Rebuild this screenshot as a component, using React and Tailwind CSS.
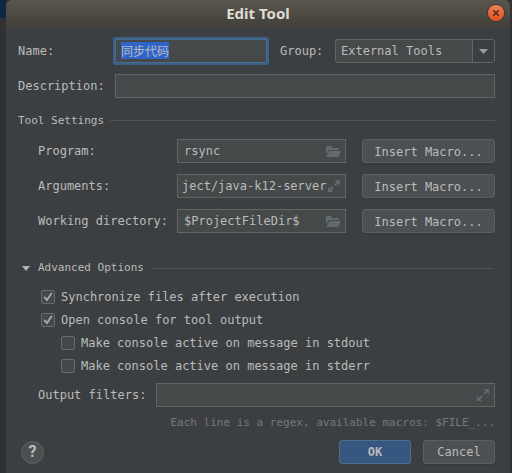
import { useEffect, useRef } from "react";

const INPUT =
  "h-6 w-full min-w-0 border border-[#646464] bg-[#45494a] text-xs leading-[22px] text-[#bbbbbb] outline-none";
const BUTTON =
  "h-6 rounded-[3px] border border-[#5e6060] bg-[#4c5052] text-xs leading-[22px] text-[#bbbbbb] shadow-[0_1px_1px_#36393b]";

function FolderIcon() {
  return (
    <svg className="h-4 w-4" viewBox="0 0 16 16" fill="#616a6e" aria-hidden="true">
      <path d="M0 11.5V3h5l1.6 2H13v2H3z" />
      <path d="M3.6 8H15l-2.8 6H0z" />
    </svg>
  );
}

function ExpandIcon() {
  return (
    <svg className="h-4 w-4" viewBox="0 0 16 16" fill="#616a6e" aria-hidden="true">
      <path d="M9 2h5v5l-1.8-1.8-2.5 2.5-1.4-1.4 2.5-2.5z" />
      <path d="M7 14H2V9l1.8 1.8 2.5-2.5 1.4 1.4-2.5 2.5z" />
    </svg>
  );
}

function IconField({ id, value, icon, label, className }) {
  return (
    <div className="relative min-w-0 flex-1">
      <input id={id} className={`${INPUT} ${className || "pr-6 pl-[6px]"}`} defaultValue={value} />
      <button type="button" aria-label={label} className="absolute top-1 right-1 h-4 w-4">
        {icon}
      </button>
    </div>
  );
}

function SettingRow({ id, label, children }) {
  return (
    <div className="flex items-center">
      <label htmlFor={id} className="w-[139px] shrink-0">
        {label}
      </label>
      {children}
      <button type="button" className={`${BUTTON} ml-4 w-[133px] shrink-0 pt-px`}>
        Insert Macro...
      </button>
    </div>
  );
}

function CheckRow({ id, label, checked, className }) {
  return (
    <div className={`flex h-[23px] items-center ${className || ""}`}>
      <span className="relative h-[14px] w-[14px] shrink-0">
        <input
          id={id}
          type="checkbox"
          defaultChecked={checked}
          className="peer block h-[14px] w-[14px] appearance-none rounded-[2px] border border-[#6b6b6b] bg-[#43494a]"
        />
        <svg
          className="pointer-events-none absolute inset-0 hidden h-[14px] w-[14px] peer-checked:block"
          viewBox="0 0 14 14"
          fill="none"
          stroke="#a7a7a7"
          strokeWidth="2"
          aria-hidden="true"
        >
          <path d="M3.2 7 6 10 10.8 3" />
        </svg>
      </span>
      <label htmlFor={id} className="pl-[6px]">
        {label}
      </label>
    </div>
  );
}

export default function App() {
  const nameRef = useRef(null);

  useEffect(() => {
    nameRef.current.focus();
    nameRef.current.select();
  }, []);

  return (
    <div className="flex min-h-screen flex-col bg-[#2f3133] bg-linear-to-r from-[#0b2a42] to-[#0b2a42] bg-[length:6px_18px] bg-no-repeat pr-[2px] pl-[6px] font-['DejaVu_Sans_Mono','Noto_Sans_CJK_SC',monospace] text-xs leading-4 text-[#bbbbbb]">
      <div className="flex flex-1 flex-col rounded-t-[6px] bg-[#3c3f41]">
        <header className="relative flex h-7 items-center justify-center rounded-t-[6px] bg-linear-to-b from-[#59564e] to-[#403f39] pb-[2px]">
          <h1 className="font-['Noto_Sans',sans-serif] text-[15px] leading-5 font-bold text-[#dfdbd2]">Edit Tool</h1>
          <button
            type="button"
            aria-label="Close"
            className="absolute top-[5px] right-[6px] flex h-4 w-4 items-center justify-center rounded-full bg-linear-to-b from-[#f27d55] to-[#e2511d] shadow-[0_0_0_1px_#3a3832]"
          >
            <svg className="h-4 w-4" viewBox="0 0 16 16" stroke="#4a2a1a" strokeWidth="1.5" aria-hidden="true">
              <path d="M5.2 5.2l5.6 5.6M10.8 5.2l-5.6 5.6" />
            </svg>
          </button>
        </header>

        <form className="flex flex-1 flex-col pt-[11px] pr-[15px] pb-[9px] pl-3">
          <div className="flex items-center">
            <label htmlFor="name" className="w-[97px] shrink-0">
              Name:
            </label>
            <div className="min-w-0 flex-1">
              <input
                id="name"
                ref={nameRef}
                defaultValue="同步代码"
                className="block h-6 w-full rounded-[1px] border border-[#466d94] bg-[#45494a] px-[5px] pb-[2px] text-xs text-[#bbbbbb] shadow-[0_0_0_2px_#3d6185] outline-none selection:bg-[#2f65ca] selection:text-[#bbbbbb]"
              />
            </div>
            <label htmlFor="group" className="w-[68px] shrink-0 pl-[13px]">
              Group:
            </label>
            <div className="relative w-40 shrink-0">
              <select
                id="group"
                className="block h-6 w-full appearance-none rounded-[3px] border border-[#646464] bg-[#45494a] pr-6 pl-[5px] text-xs text-[#bbbbbb]"
              >
                <option>External Tools</option>
              </select>
              <span className="pointer-events-none absolute top-px right-px flex h-[22px] w-[22px] items-center justify-center rounded-r-[2px] border-l border-[#646464] bg-[#3c3f41]">
                <svg className="h-[5px] w-[9px]" viewBox="0 0 9 5" fill="#9a9da0" aria-hidden="true">
                  <path d="M0 0h9L4.5 5z" />
                </svg>
              </span>
            </div>
          </div>

          <div className="mt-[11px] flex items-center">
            <label htmlFor="description" className="w-[97px] shrink-0">
              Description:
            </label>
            <input id="description" className={`${INPUT} px-[6px]`} />
          </div>

          <div className="mt-[14px] flex items-center gap-[6px]">
            <h2 className="pt-[2px] text-[11px] leading-[14px]">Tool Settings</h2>
            <div className="h-px flex-1 bg-[#515456]" />
          </div>

          <div className="mt-[11px] flex flex-col gap-[11px] pl-5">
            <SettingRow id="program" label="Program:">
              <IconField id="program" value="rsync" label="Browse" icon={<FolderIcon />} />
            </SettingRow>
            <SettingRow id="arguments" label="Arguments:">
              <IconField
                id="arguments"
                value="ject/java-k12-server"
                label="Expand"
                icon={<ExpandIcon />}
                className="pr-[17px] pl-1"
              />
            </SettingRow>
            <SettingRow id="directory" label="Working directory:">
              <IconField id="directory" value="$ProjectFileDir$" label="Browse" icon={<FolderIcon />} />
            </SettingRow>
          </div>

          <div className="mt-[27px] flex items-center pr-[2px]">
            <button type="button" className="flex items-center text-[11px] leading-4" aria-expanded="true">
              <svg className="mr-2 ml-1 h-[5px] w-2" viewBox="0 0 8 5" fill="#afb1b3" aria-hidden="true">
                <path d="M0 0h8L4 5z" />
              </svg>
              Advanced Options
            </button>
            <div className="ml-2 h-px flex-1 bg-[#515456]" />
          </div>

          <div className="mt-[9px] flex flex-col pl-[23px]">
            <CheckRow id="sync" label="Synchronize files after execution" checked />
            <CheckRow id="console" label="Open console for tool output" checked />
            <CheckRow id="stdout" label="Make console active on message in stdout" className="pl-5" />
            <CheckRow id="stderr" label="Make console active on message in stderr" className="pl-5" />
          </div>

          <div className="mt-[6px] flex items-center pl-5">
            <label htmlFor="filters" className="w-[118px] shrink-0">
              Output filters:
            </label>
            <IconField id="filters" value="" label="Expand" icon={<ExpandIcon />} />
          </div>
          <p className="mt-2 text-right text-[11px] leading-4 text-[#787878]">
            Each line is a regex, available macros: $FILE_...
          </p>

          <div className="mt-auto flex items-center gap-3">
            <button
              type="button"
              aria-label="Help"
              className="mr-auto ml-[3px] flex h-[23px] w-[23px] items-center justify-center rounded-full border border-[#5e6060] bg-[#4c5052] font-['Roboto',sans-serif] text-base font-bold text-[#bbbbbb]"
            >
              ?
            </button>
            <button
              type="submit"
              className="h-6 w-[72px] rounded-[3px] border border-[#4c708c] bg-[#365880] text-xs font-bold text-[#bbbbbb]"
            >
              OK
            </button>
            <button type="button" className={`${BUTTON} w-[72px]`}>
              Cancel
            </button>
          </div>
        </form>
      </div>
    </div>
  );
}
